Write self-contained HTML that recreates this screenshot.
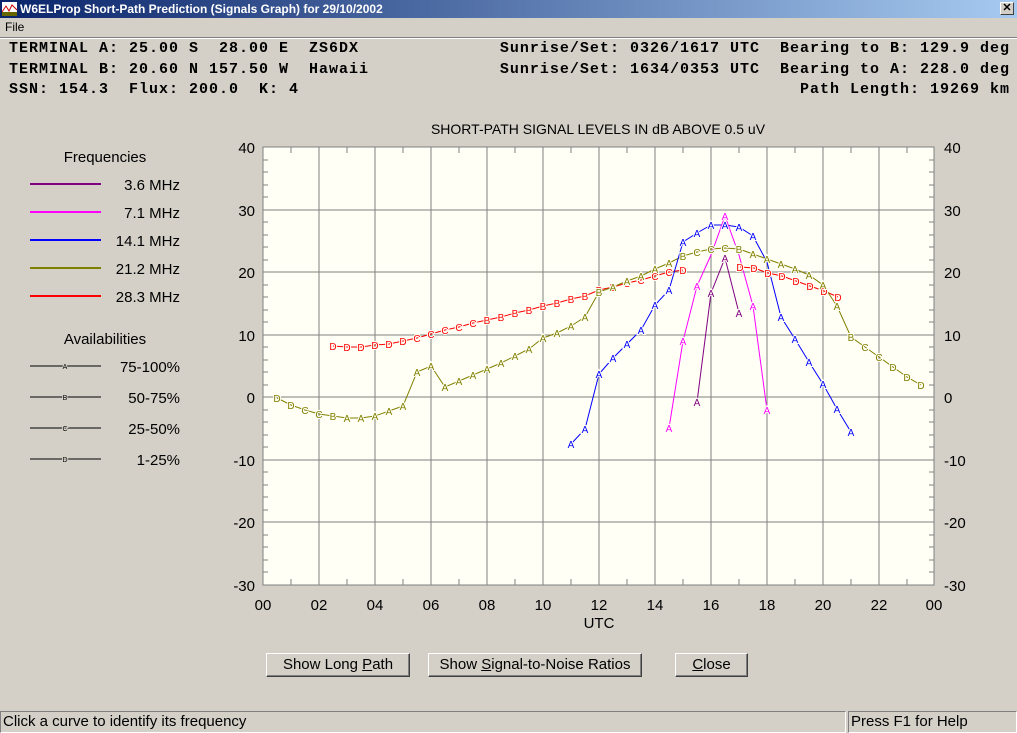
<!DOCTYPE html>
<html><head><meta charset="utf-8"><style>
body{margin:0;width:1017px;height:733px;background:#d4d0c8;position:relative;overflow:hidden;font-family:"Liberation Sans",Arial,sans-serif}
.tb{position:absolute;left:0;top:0;width:1017px;height:18px;background:linear-gradient(90deg,#0a246a,#a6caf0);color:#fff;font-weight:bold;font-size:12px;line-height:18px}
.mono{position:absolute;font-family:"Liberation Mono",monospace;font-weight:bold;font-size:15px;letter-spacing:1px;white-space:pre;color:#000}
.btn{position:absolute;top:653px;height:24px;background:#d4d0c8;border:1px solid;border-color:#fff #404040 #404040 #fff;box-shadow:inset -1px -1px #808080;font-size:15px;line-height:22px;text-align:center;box-sizing:border-box}
.st{position:absolute;top:711px;height:22px;border:1px solid;border-color:#808080 #fff #fff #808080;box-sizing:border-box;font-size:15px;line-height:20px;padding-left:2px}
</style></head><body>
<div class="tb"><svg style="position:absolute;left:2px;top:2px" width="15" height="14"><rect width="15" height="14" fill="#fff"/><path d="M0 10 L4 4 L7 9 L10 3 L15 8" stroke="#c00" fill="none"/><rect y="10" width="15" height="4" fill="#660"/></svg><span style="position:absolute;left:20px">W6ELProp Short-Path Prediction (Signals Graph) for 29/10/2002</span>
<div style="position:absolute;right:3px;top:2px;width:14px;height:13px;background:#d4d0c8;border:1px solid;border-color:#fff #404040 #404040 #fff;box-sizing:border-box;color:#000;font-size:11px;line-height:10px;text-align:center">✕</div></div>
<div style="position:absolute;left:5px;top:20px;font-size:12px">File</div>
<div style="position:absolute;left:0;top:37px;width:1017px;height:1px;background:#808080"></div>
<div style="position:absolute;left:0;top:38px;width:1017px;height:1px;background:#fff"></div>
<div class="mono" style="left:9px;top:40px">TERMINAL A: 25.00 S  28.00 E  ZS6DX</div>
<div class="mono" style="left:9px;top:61px">TERMINAL B: 20.60 N 157.50 W  Hawaii</div>
<div class="mono" style="left:9px;top:81px">SSN: 154.3  Flux: 200.0  K: 4</div>
<div class="mono" style="right:7px;top:40px;text-align:right">Sunrise/Set: 0326/1617 UTC  Bearing to B: 129.9 deg</div>
<div class="mono" style="right:7px;top:61px;text-align:right">Sunrise/Set: 1634/0353 UTC  Bearing to A: 228.0 deg</div>
<div class="mono" style="right:7px;top:81px;text-align:right">Path Length: 19269 km</div>

<svg style="position:absolute;left:0;top:0" width="1017" height="733" font-family="Liberation Sans,Arial,sans-serif">
<text x="598" y="134" font-size="14" text-anchor="middle">SHORT-PATH SIGNAL LEVELS IN dB ABOVE 0.5 uV</text>
<text x="105" y="162" font-size="15" text-anchor="middle">Frequencies</text>
<g stroke-width="2"><line x1="30" y1="184" x2="101" y2="184" stroke="#800080"/><line x1="30" y1="212" x2="101" y2="212" stroke="#ff00ff"/><line x1="30" y1="240" x2="101" y2="240" stroke="#0000ff"/><line x1="30" y1="268" x2="101" y2="268" stroke="#808000"/><line x1="30" y1="296" x2="101" y2="296" stroke="#ff0000"/></g>
<g font-size="15" text-anchor="end"><text x="180" y="190">3.6 MHz</text><text x="180" y="218">7.1 MHz</text><text x="180" y="246">14.1 MHz</text><text x="180" y="274">21.2 MHz</text><text x="180" y="302">28.3 MHz</text></g>
<text x="105" y="344" font-size="15" text-anchor="middle">Availabilities</text>
<g stroke="#000"><line x1="30" y1="366" x2="101" y2="366"/><line x1="30" y1="397" x2="101" y2="397"/><line x1="30" y1="428" x2="101" y2="428"/><line x1="30" y1="459" x2="101" y2="459"/></g>
<g font-size="7" text-anchor="middle" paint-order="stroke" stroke="#d4d0c8" stroke-width="2"><text x="65" y="369">A</text><text x="65" y="400">B</text><text x="65" y="431">C</text><text x="65" y="462">D</text></g>
<g font-size="15" text-anchor="end"><text x="180" y="372">75-100%</text><text x="180" y="403">50-75%</text><text x="180" y="434">25-50%</text><text x="180" y="465">1-25%</text></g>

<rect x="263" y="147" width="671" height="438" fill="#fffff6" stroke="#808080"/>
<g stroke="#808080">
<path d="M319 147V585M375 147V585M431 147V585M487 147V585M543 147V585M599 147V585M655 147V585M711 147V585M767 147V585M823 147V585M879 147V585"/>
<path d="M263 210H934M263 272H934M263 335H934M263 397H934M263 460H934M263 522H934"/>
<path d="M291 585v-6M347 585v-6M403 585v-6M459 585v-6M515 585v-6M571 585v-6M627 585v-6M683 585v-6M739 585v-6M795 585v-6M851 585v-6M907 585v-6M291 147v6M347 147v6M403 147v6M459 147v6M515 147v6M571 147v6M627 147v6M683 147v6M739 147v6M795 147v6M851 147v6M907 147v6"/>
<path d="M263 160h5M263 172h5M263 185h5M263 197h5M263 222h5M263 235h5M263 247h5M263 260h5M263 285h5M263 297h5M263 310h5M263 322h5M263 347h5M263 360h5M263 372h5M263 385h5M263 410h5M263 422h5M263 435h5M263 447h5M263 472h5M263 485h5M263 497h5M263 510h5M263 535h5M263 547h5M263 560h5M263 572h5"/>
<path d="M934 160h-5M934 172h-5M934 185h-5M934 197h-5M934 222h-5M934 235h-5M934 247h-5M934 260h-5M934 285h-5M934 297h-5M934 310h-5M934 322h-5M934 347h-5M934 360h-5M934 372h-5M934 385h-5M934 410h-5M934 422h-5M934 435h-5M934 447h-5M934 472h-5M934 485h-5M934 497h-5M934 510h-5M934 535h-5M934 547h-5M934 560h-5M934 572h-5"/>
</g>
<g font-size="15" text-anchor="end"><text x="255" y="153">40</text><text x="255" y="216">30</text><text x="255" y="278">20</text><text x="255" y="341">10</text><text x="255" y="403">0</text><text x="255" y="466">-10</text><text x="255" y="528">-20</text><text x="255" y="591">-30</text></g>
<g font-size="15"><text x="944" y="153">40</text><text x="944" y="216">30</text><text x="944" y="278">20</text><text x="944" y="341">10</text><text x="944" y="403">0</text><text x="944" y="466">-10</text><text x="944" y="528">-20</text><text x="944" y="591">-30</text></g>
<g font-size="15" text-anchor="middle"><text x="263" y="610">00</text><text x="319" y="610">02</text><text x="375" y="610">04</text><text x="431" y="610">06</text><text x="487" y="610">08</text><text x="543" y="610">10</text><text x="599" y="610">12</text><text x="655" y="610">14</text><text x="711" y="610">16</text><text x="767" y="610">18</text><text x="823" y="610">20</text><text x="879" y="610">22</text><text x="934" y="610">00</text><text x="599" y="628">UTC</text></g>

<g fill="none" stroke-width="1">
<polyline stroke="#ff0000" points="333,346 347,347 361,347 375,345 389,344 403,341 417,338 431,334 445,330 459,327 473,323 487,320 501,317 515,313 529,310 543,306 557,303 571,299 585,296 599,290 613,287 627,283 641,280 655,276 669,272 683,270"/>
<polyline stroke="#ff0000" points="740,267 754,268 768,273 782,276 796,281 810,286 824,291 838,297"/>
<polyline stroke="#808000" points="277,398 291,405 305,410 319,414 333,416 347,418 361,418 375,416 389,411 403,406 417,372 431,366 445,387 459,381 473,375 487,369 501,363 515,356 529,349 543,338 557,333 571,326 585,317 599,292 613,287 627,281 641,276 655,269 669,263 683,256 697,252 711,249 725,248 739,249 753,254 767,259 781,264 795,269 809,275 823,285 837,306 851,337 865,347 879,357 893,367 907,377 921,385"/>
<polyline stroke="#0000ff" points="571,444 585,429 599,374 613,358 627,344 641,330 655,305 669,290 683,242 697,233 711,225 725,225 739,227 753,236 767,262 781,317 795,339 809,362 823,384 837,409 851,432"/>
<polyline stroke="#ff00ff" points="669,428 683,341 697,286 711,255 725,216 739,255 753,306 767,410"/>
<polyline stroke="#800080" points="697,402 711,293 725,258 739,313"/>
</g>
<g font-size="10" text-anchor="middle" paint-order="stroke" stroke="#fffff6" stroke-width="2">
<g fill="#ff0000"><text x="333" y="350">D</text><text x="347" y="351">D</text><text x="361" y="351">D</text><text x="375" y="349">D</text><text x="389" y="348">D</text><text x="403" y="345">D</text><text x="417" y="342">C</text><text x="431" y="338">C</text><text x="445" y="334">C</text><text x="459" y="331">C</text><text x="473" y="327">C</text><text x="487" y="324">B</text><text x="501" y="321">B</text><text x="515" y="317">B</text><text x="529" y="314">B</text><text x="543" y="310">B</text><text x="557" y="307">B</text><text x="571" y="303">B</text><text x="585" y="300">B</text><text x="599" y="294">B</text><text x="613" y="291">B</text><text x="627" y="287">C</text><text x="641" y="284">C</text><text x="655" y="280">C</text><text x="669" y="276">C</text><text x="683" y="274">D</text>
<text x="740" y="271">D</text><text x="754" y="272">D</text><text x="768" y="277">D</text><text x="782" y="280">D</text><text x="796" y="285">D</text><text x="810" y="290">D</text><text x="824" y="295">D</text><text x="838" y="301">D</text></g>
<g fill="#808000"><text x="277" y="402">D</text><text x="291" y="409">D</text><text x="305" y="414">C</text><text x="319" y="418">C</text><text x="333" y="420">B</text><text x="347" y="422">A</text><text x="361" y="422">A</text><text x="375" y="420">A</text><text x="389" y="415">A</text><text x="403" y="410">A</text><text x="417" y="376">A</text><text x="431" y="370">A</text><text x="445" y="391">A</text><text x="459" y="385">A</text><text x="473" y="379">A</text><text x="487" y="373">A</text><text x="501" y="367">A</text><text x="515" y="360">A</text><text x="529" y="353">A</text><text x="543" y="342">A</text><text x="557" y="337">A</text><text x="571" y="330">A</text><text x="585" y="321">A</text><text x="599" y="296">B</text><text x="613" y="291">A</text><text x="627" y="285">A</text><text x="641" y="280">A</text><text x="655" y="273">A</text><text x="669" y="267">A</text><text x="683" y="260">B</text><text x="697" y="256">C</text><text x="711" y="253">C</text><text x="725" y="252">C</text><text x="739" y="253">B</text><text x="753" y="258">A</text><text x="767" y="263">A</text><text x="781" y="268">A</text><text x="795" y="273">A</text><text x="809" y="279">A</text><text x="823" y="289">A</text><text x="837" y="310">A</text><text x="851" y="341">B</text><text x="865" y="351">C</text><text x="879" y="361">C</text><text x="893" y="371">D</text><text x="907" y="381">D</text><text x="921" y="389">D</text></g>
<g fill="#0000ff"><text x="571" y="448">A</text><text x="585" y="433">A</text><text x="599" y="378">A</text><text x="613" y="362">A</text><text x="627" y="348">A</text><text x="641" y="334">A</text><text x="655" y="309">A</text><text x="669" y="294">A</text><text x="683" y="246">A</text><text x="697" y="237">A</text><text x="711" y="229">A</text><text x="725" y="229">A</text><text x="739" y="231">A</text><text x="753" y="240">A</text><text x="781" y="321">A</text><text x="795" y="343">A</text><text x="809" y="366">A</text><text x="823" y="388">A</text><text x="837" y="413">A</text><text x="851" y="436">A</text></g>
<g fill="#ff00ff"><text x="669" y="432">A</text><text x="683" y="345">A</text><text x="697" y="290">A</text><text x="725" y="220">A</text><text x="753" y="310">A</text><text x="767" y="414">A</text></g>
<g fill="#800080"><text x="697" y="406">A</text><text x="711" y="297">A</text><text x="725" y="262">A</text><text x="739" y="317">A</text></g>
</g>
</svg>

<div class="btn" style="left:266px;width:144px">Show Long <u>P</u>ath</div>
<div class="btn" style="left:428px;width:214px">Show <u>S</u>ignal-to-Noise Ratios</div>
<div class="btn" style="left:675px;width:73px"><u>C</u>lose</div>
<div class="st" style="left:0;width:846px">Click a curve to identify its frequency</div>
<div class="st" style="left:848px;width:169px">Press F1 for Help</div>
</body></html>
